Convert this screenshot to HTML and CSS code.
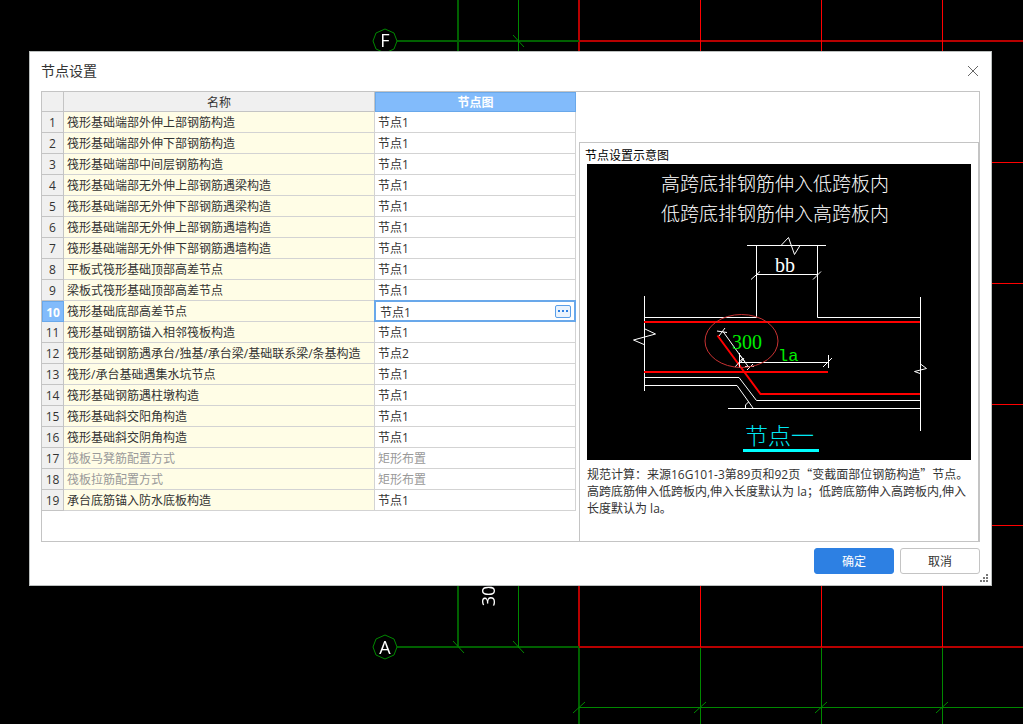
FILE: index.html
```
<!DOCTYPE html>
<html lang="zh-CN">
<head>
<meta charset="utf-8">
<title>节点设置</title>
<link rel="stylesheet" href="styles.css">
</head>
<body>
<svg class="canvas" aria-hidden="true">
  <g class="axis-red">
    <path class="dim" d="M579 0V647M579 41H3000M579 647H3000"/>
    <path d="M700.5 0V647M821.5 0V647M942.5 0V647M579 162.500H3000M579 283.500H3000M579 404.500H3000M579 525.500H3000"/>
  </g>
  <g class="axis-green">
    <path class="dim" d="M458 0V648M397 41H579M397 647H579M579 648V3000"/>
    <path d="M518.5 0V648M700.5 648V3000M821.5 648V3000M942.5 648V3000M579 707.500H3000"/>
    <path d="M513 35L524 47M453 641L464 653M513 641L524 653M573 713L585 702M694 713L706 702M815 713L827 702M936 713L948 702"/>
    <path d="M385 29L394 33L397 41L394 49L385 53L376 49L373 41L376 33ZM385 635L394 639L397 647L394 655L385 659L376 655L373 647L376 639Z"/>
  </g>
  <g class="axis-text">
    <text x="385" y="47">F</text>
    <text x="385" y="654">A</text>
    <text transform="translate(495 596) rotate(-90)">30</text>
  </g>
</svg>

<main class="dialog" role="dialog" aria-labelledby="dialog-title">
  <header class="titlebar">
    <h1 class="title" id="dialog-title">节点设置</h1>
    <button class="close" type="button" aria-label="关闭">
      <svg width="12" height="12" viewBox="0 0 12 12"><path d="M1 1L11 11M11 1L1 11"/></svg>
    </button>
  </header>

  <div class="panel">
    <div class="list">
      <table class="grid">
        <colgroup><col class="col-no"><col class="col-name"><col class="col-node"></colgroup>
        <thead>
          <tr><th></th><th scope="col">名称</th><th scope="col" class="active">节点图</th></tr>
        </thead>
        <tbody>
          <tr><th scope="row">1</th><td>筏形基础端部外伸上部钢筋构造</td><td>节点1</td></tr>
          <tr><th scope="row">2</th><td>筏形基础端部外伸下部钢筋构造</td><td>节点1</td></tr>
          <tr><th scope="row">3</th><td>筏形基础端部中间层钢筋构造</td><td>节点1</td></tr>
          <tr><th scope="row">4</th><td>筏形基础端部无外伸上部钢筋遇梁构造</td><td>节点1</td></tr>
          <tr><th scope="row">5</th><td>筏形基础端部无外伸下部钢筋遇梁构造</td><td>节点1</td></tr>
          <tr><th scope="row">6</th><td>筏形基础端部无外伸上部钢筋遇墙构造</td><td>节点1</td></tr>
          <tr><th scope="row">7</th><td>筏形基础端部无外伸下部钢筋遇墙构造</td><td>节点1</td></tr>
          <tr><th scope="row">8</th><td>平板式筏形基础顶部高差节点</td><td>节点1</td></tr>
          <tr><th scope="row">9</th><td>梁板式筏形基础顶部高差节点</td><td>节点1</td></tr>
          <tr>
            <th scope="row" class="active">10</th><td>筏形基础底部高差节点</td>
            <td class="editing">
              <div class="editor">
                <input class="editor-input" type="text" value="节点1" aria-label="节点图">
                <button class="more" type="button" aria-label="选择节点图">
                  <svg width="10" height="2" viewBox="0 0 10 2"><path d="M0 0h2v2H0zM4 0h2v2H4zM8 0h2v2H8z"/></svg>
                </button>
              </div>
            </td>
          </tr>
          <tr><th scope="row">11</th><td>筏形基础钢筋锚入相邻筏板构造</td><td>节点1</td></tr>
          <tr><th scope="row">12</th><td>筏形基础钢筋遇承台/独基/承台梁/基础联系梁/条基构造</td><td>节点2</td></tr>
          <tr><th scope="row">13</th><td>筏形/承台基础遇集水坑节点</td><td>节点1</td></tr>
          <tr><th scope="row">14</th><td>筏形基础钢筋遇柱墩构造</td><td>节点1</td></tr>
          <tr><th scope="row">15</th><td>筏形基础斜交阳角构造</td><td>节点1</td></tr>
          <tr><th scope="row">16</th><td>筏形基础斜交阴角构造</td><td>节点1</td></tr>
          <tr class="disabled"><th scope="row">17</th><td>筏板马凳筋配置方式</td><td>矩形布置</td></tr>
          <tr class="disabled"><th scope="row">18</th><td>筏板拉筋配置方式</td><td>矩形布置</td></tr>
          <tr><th scope="row">19</th><td>承台底筋锚入防水底板构造</td><td>节点1</td></tr>
        </tbody>
      </table>
    </div>

    <div class="side">
      <section class="preview">
        <h2 class="preview-title">节点设置示意图</h2>
        <svg class="drawing" viewBox="587 164 384 296" role="img" aria-label="节点一">
          <rect x="587" y="164" width="384" height="296"/>
          <g class="note">
            <text x="661" y="191">高跨底排钢筋伸入低跨板内</text>
            <text x="661" y="221">低跨底排钢筋伸入高跨板内</text>
          </g>
          <g class="outline">
            <path d="M747 245.500H781L788.500 237.500L794.500 254.500L800 245.500H826M781 245.500H800"/>
            <path d="M756.500 245V317.500H644M817.500 245V317.500H920"/>
            <path d="M644.500 296V391M920.500 297V431"/>
            <path d="M756 274.500H818M751 279.500L760 271.500M813 279.500L821 271.500"/>
            <path d="M645 329L655.500 334L633.500 340L644 344.500M920.500 364L926.500 368.500L914.500 371.500L920 373.500"/>
            <path d="M644 377.500H739L756.500 400.500H920"/>
            <path d="M644 385.500H737L753 408M728 408.500H920M745.500 408V405L748.500 402"/>
          </g>
          <g class="rebar">
            <path d="M644 322H920M644 372H828"/>
            <path d="M717.500 335.500L760.500 394H920"/>
          </g>
          <g class="outline">
            <path d="M723 331.500L748.500 367M717 331L727 332.500M719 336L725 328M745 366.500H754M747 370L753 364"/>
            <path d="M739 362.500H828M739.500 353V368M739 354L745 362M735 367L743 358M741 362L744 358M828.500 355V368M823 367L832 358"/>
          </g>
          <ellipse cx="741.5" cy="341" rx="36.5" ry="26.5"/>
          <text class="bb" x="775" y="272">bb</text>
          <text class="len" x="732" y="349">300</text>
          <text class="la" x="778" y="361">la</text>
          <text class="name" x="745" y="444">节点一</text>
          <path class="underline" d="M743 450.500H819"/>
        </svg>
        <p class="desc">规范计算：来源16G101-3第89页和92页<span class="quoted">“变截面部位钢筋构造”</span>节点。高跨底筋伸入低跨板内,伸入长度默认为 la；低跨底筋伸入高跨板内,伸入长度默认为 la。</p>
      </section>
    </div>
  </div>

  <footer class="actions">
    <button class="btn primary" type="button">确定</button>
    <button class="btn" type="button">取消</button>
  </footer>
  <svg class="grip" width="8" height="8" viewBox="0 0 8 8" aria-hidden="true"><path d="M6 0h2v2H6zM3 3h2v2H3zM6 3h2v2H6zM0 6h2v2H0zM3 6h2v2H3zM6 6h2v2H6z"/></svg>
</main>
</body>
</html>
```
FILE: styles.css
```
* {
  box-sizing: border-box;
}

body {
  margin: 0;
  min-height: 100vh;
  padding: 51px 31px 0 29px;
  background: #000;
  color: #333;
  font: 12px/16px "Open Sans", "Noto Sans CJK SC", sans-serif;
}

button,
input {
  font: inherit;
  color: inherit;
}

.canvas {
  position: fixed;
  inset: 0;
  width: 100%;
  height: 100%;
  fill: none;
}

.axis-red {
  stroke: #f00;
}

.axis-green {
  stroke: #008800;
}

.axis-red .dim {
  stroke: #b80000;
  stroke-width: 2;
}

.axis-green .dim {
  stroke: #006000;
  stroke-width: 2;
}

.axis-text {
  fill: #fff;
  font-size: 18px;
  text-anchor: middle;
}

.dialog {
  position: relative;
  padding: 0 11px;
  background: #fff;
  border: 1px solid #bcc0bf;
}

.titlebar {
  display: flex;
  align-items: center;
  justify-content: space-between;
  height: 39px;
  padding-bottom: 2px;
}

.title {
  margin: 0;
  font-size: 14px;
  line-height: 20px;
  font-weight: 400;
}

.close {
  display: flex;
  padding: 1px;
  border: 0;
  background: none;
}

.close path {
  stroke: #666;
  fill: none;
}

.panel {
  display: flex;
  border: 1px solid #c4c4c4;
}

.list {
  flex: 0 0 537px;
  padding-bottom: 30px;
}

.grid {
  width: 534px;
  table-layout: fixed;
  border-collapse: separate;
  border-spacing: 0;
}

.col-no {
  width: 22px;
}

.col-name {
  width: 311px;
}

.col-node {
  width: 201px;
}

.grid th,
.grid td {
  height: 21px;
  padding: 2px 3px 0;
  border: solid #d3d3d3;
  border-width: 0 1px 1px 0;
  font-weight: 400;
  text-align: left;
  white-space: nowrap;
}

.grid th {
  padding: 2px 0 0;
  background: #f0f0f0;
  border-color: #c4c4c4;
  text-align: center;
}

.grid thead th {
  height: 20px;
}

.grid td:nth-child(2) {
  background: #fffde6;
}

.grid th.active {
  background: #82bbfb;
  border: 1px solid #69a8ea;
  color: #fff;
  font-weight: 700;
}

.grid .disabled td {
  color: #999;
}

.grid .editing {
  padding: 0;
}

.editor {
  position: relative;
  display: flex;
  align-items: center;
  height: 22px;
  margin: -1px;
  padding: 0 3px 0 4px;
  background: #fff;
  border: 2px solid #69a8ea;
}

.editor-input {
  flex: 1;
  min-width: 0;
  height: 18px;
  padding: 2px 0 0;
  border: 0;
  outline: 0;
  background: none;
}

.more {
  display: flex;
  align-items: center;
  justify-content: center;
  width: 16px;
  height: 13px;
  padding: 0;
  border: 1px solid #5b9fe8;
  border-radius: 2px;
  background: #eaf3fd;
}

.more path {
  fill: #2d80e3;
}

.side {
  flex: 1;
  display: flex;
  min-width: 0;
  padding-top: 50px;
}

.preview {
  flex: 1;
  min-width: 0;
  border: solid #c4c4c4;
  border-width: 1px 1px 0 1px;
}

.preview-title {
  margin: 0;
  padding: 5px 5px 0;
  color: #000;
  font-size: 12px;
  font-weight: 400;
}

.drawing {
  display: block;
  width: calc(100% - 14px);
  margin: 0 7px;
}

.drawing path,
.drawing ellipse {
  fill: none;
}

.outline {
  stroke: #fff;
}

.rebar {
  stroke: #f00;
  stroke-width: 2;
}

.drawing ellipse {
  stroke: #c83232;
}

.note {
  fill: #fff;
  font: 300 19px "Noto Sans CJK SC", sans-serif;
}

.bb {
  fill: #fff;
  font: 20px "Liberation Serif", serif;
}

.len {
  fill: #0e0;
  font: 20px "Liberation Serif", serif;
}

.la {
  fill: #0e0;
  font: 17px "Liberation Mono", monospace;
}

.name {
  fill: #00e8f4;
  font: 300 23px "Noto Sans CJK SC", sans-serif;
}

.underline {
  stroke: #0ff;
  stroke-width: 3;
}

.desc {
  margin: 5px 7px 0;
  line-height: 17px;
}

.quoted {
  font-family: "Noto Sans CJK SC", sans-serif;
}

.actions {
  display: flex;
  justify-content: flex-end;
  gap: 6px;
  padding: 6px 0 11px;
}

.btn {
  width: 80px;
  height: 26px;
  padding: 2px 0 0;
  border: 1px solid #c4c4c4;
  border-radius: 3px;
  background: #fff;
}

.btn.primary {
  border-color: #2d80e3;
  background: #2d80e3;
  color: #fff;
}

.grip {
  position: absolute;
  right: 3px;
  bottom: 3px;
  fill: #777;
}
```
